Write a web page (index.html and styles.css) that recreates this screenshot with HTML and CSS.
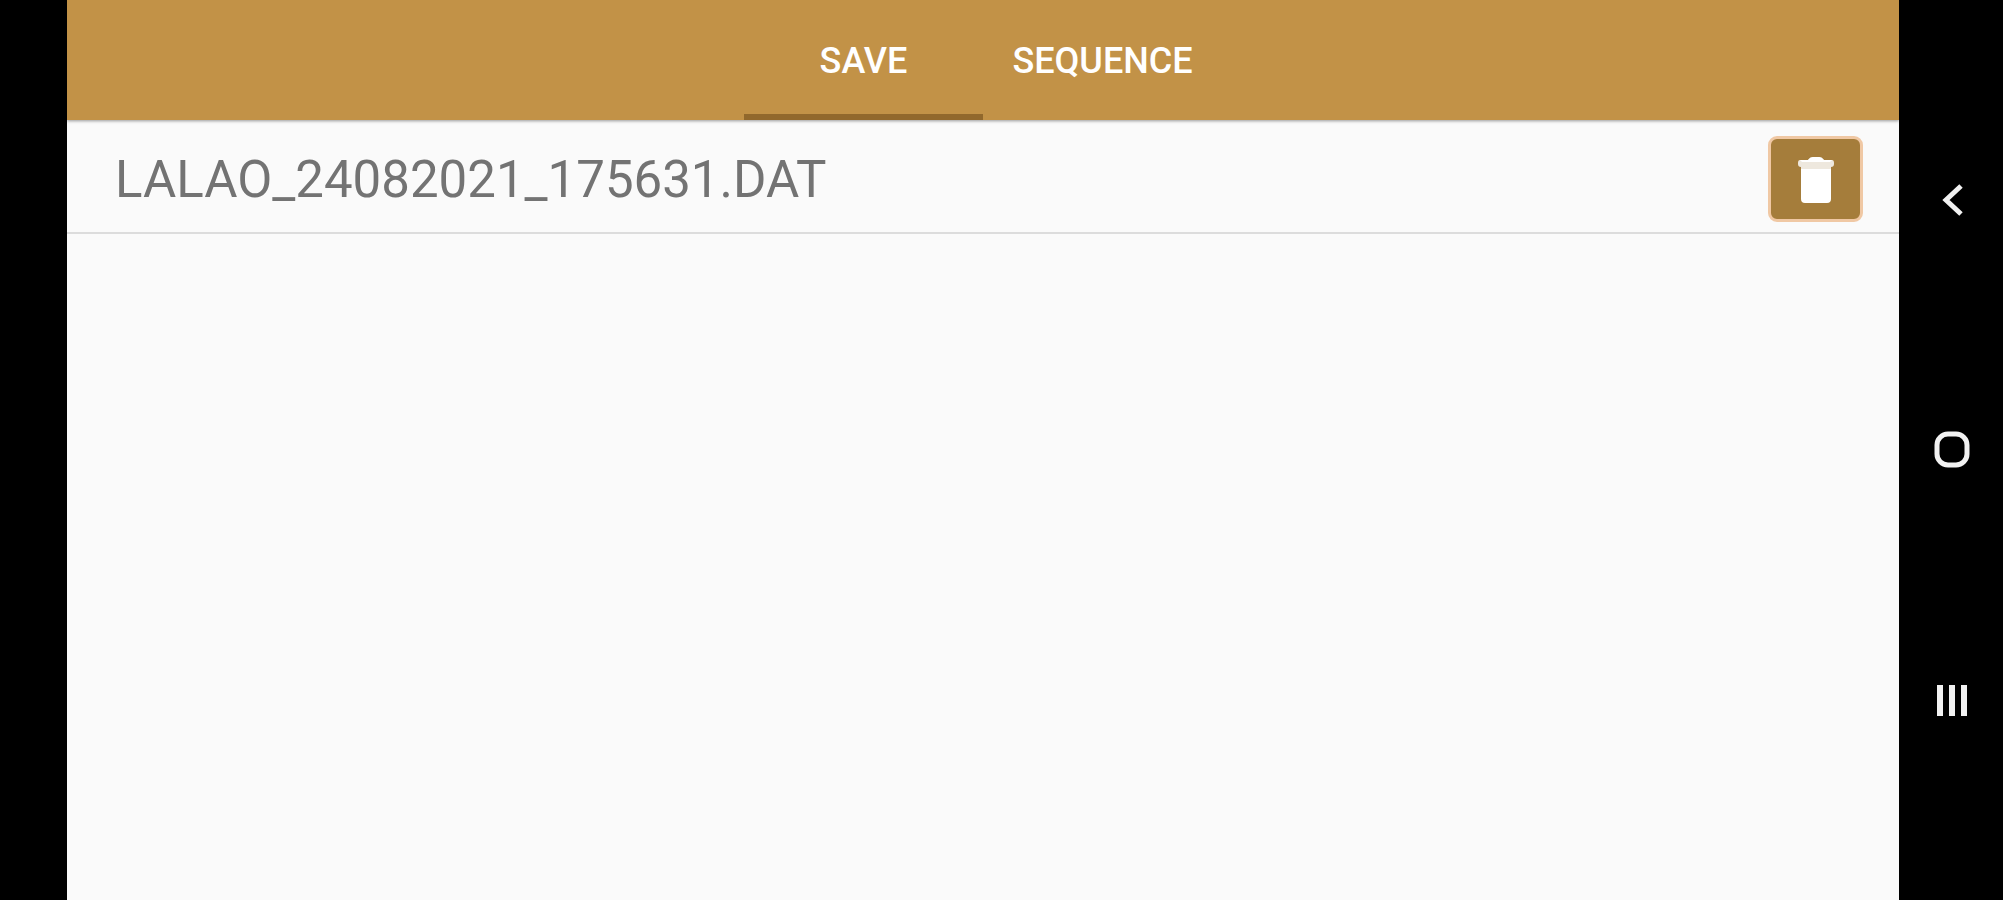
FILE: index.html
```html
<!doctype html>
<html lang="en">
<head>
    <meta charset="UTF-8">
    <meta name="viewport" content="width=device-width, initial-scale=1.0">
    <title>Saved files</title>
    <link rel="stylesheet" href="styles.css">
</head>
<body>
    <div class="wrapper">
        <main class="screen">
            <div class="tabs" role="tablist">
                <button type="button" class="tab active" role="tab" aria-selected="true">SAVE</button>
                <button type="button" class="tab" role="tab" aria-selected="false">SEQUENCE</button>
            </div>

            <ul class="file_list">
                <li class="file">
                    <span class="file_name">LALAO_24082021_175631.DAT</span>
                    <button type="button" class="delete_button" aria-label="Delete">
                        <svg width="38" height="50" viewBox="0 0 38 50">
                            <path class="lid" d="M3 6h8q2-3 5-3h6q3 0 5 3h8q2 0 2 3v1q0 3-3 3v2H4v-2q-3 0-3-3V9q0-3 2-3z"/>
                            <path class="can" d="M3 6h8q2-3 5-3h6q3 0 5 3h8l-2 2H5zM4 15h30v30q0 4-4 4H8q-4 0-4-4z"/>
                        </svg>
                    </button>
                </li>
            </ul>
        </main>

        <nav class="nav_bar">
            <button type="button" class="nav_button" aria-label="Back">
                <svg width="40" height="40" viewBox="0 0 40 40">
                    <path d="M30 6L15 20l15 14" stroke-width="5"/>
                </svg>
            </button>
            <button type="button" class="nav_button" aria-label="Home">
                <svg width="40" height="40" viewBox="0 0 40 40">
                    <rect x="6" y="4" width="30" height="31" rx="11" stroke-width="5"/>
                </svg>
            </button>
            <button type="button" class="nav_button" aria-label="Recent apps">
                <svg width="40" height="40" viewBox="0 0 40 40">
                    <path d="M9 5v31M21 5v31M33 5v31" stroke-width="6"/>
                </svg>
            </button>
        </nav>
    </div>
</body>
</html>
```
FILE: styles.css
```css
* {
    box-sizing: border-box;
}

body {
    font-family: Roboto, sans-serif;
    margin: 0;
    background: #000;
}

button {
    font-family: inherit;
    border: none;
    padding: 0;
    cursor: pointer;
}

svg {
    display: block;
}

.wrapper {
    display: flex;
    min-height: 100vh;
    padding-left: 67px;
}

.screen {
    flex: 1;
    background: #fafafa;
}

.tabs {
    display: flex;
    justify-content: center;
    background: #c29247;
    box-shadow: 0 1px 3px rgba(0, 0, 0, 0.4);
}

.tab {
    width: 239px;
    height: 120px;
    border-top: 8px solid transparent;
    border-bottom: 6px solid transparent;
    background: none;
    color: #fff;
    font-size: 36px;
    font-weight: 500;
}

.tab.active {
    border-bottom-color: #91682c;
}

.file_list {
    list-style: none;
    margin: 0;
    padding: 0;
}

.file {
    display: flex;
    justify-content: space-between;
    align-items: center;
    padding: 16px 36px 10px 48px;
    border-bottom: 2px solid #dcdcdc;
}

.file_name {
    color: #737373;
    font-size: 51px;
}

.delete_button {
    display: flex;
    justify-content: center;
    align-items: center;
    width: 95px;
    height: 86px;
    border: 3px solid #f0c8a4;
    border-radius: 9px;
    background: #a57d3b;
}

.lid {
    fill: #eee8de;
}

.can {
    fill: #fff;
}

.nav_bar {
    display: grid;
    grid-template-rows: repeat(3, 1fr);
    width: 104px;
    padding: 75px 0;
}

.nav_button {
    display: flex;
    justify-content: center;
    align-items: center;
    background: none;
}

.nav_button svg {
    fill: none;
    stroke: #f2f2f2;
}
```
